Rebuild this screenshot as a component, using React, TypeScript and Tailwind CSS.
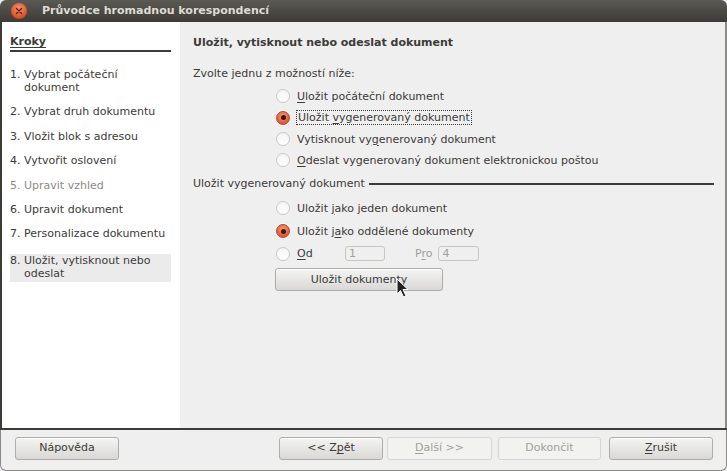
import React from "react";

const font = { fontFamily: '"DejaVu Sans", sans-serif' };

function Radio({ checked }: { checked?: boolean }) {
  if (checked) {
    return (
      <span className="inline-flex h-[14px] w-[14px] shrink-0 items-center justify-center rounded-full border border-[#b8432a] bg-[radial-gradient(circle_at_50%_35%,#f59a7c,#df5a3a_70%)] shadow-[0_0_0_1px_rgba(255,255,255,0.6)]">
        <span className="h-[5px] w-[5px] rounded-full bg-[#3a1a12]" />
      </span>
    );
  }
  return (
    <span className="inline-block h-[14px] w-[14px] shrink-0 rounded-full border border-[#c9c7c3] bg-[linear-gradient(#f4f4f4,#ffffff)]" />
  );
}

function U({ children }: { children: React.ReactNode }) {
  return <span className="underline underline-offset-2">{children}</span>;
}

function Btn({
  children,
  disabled,
  className = "",
}: {
  children: React.ReactNode;
  disabled?: boolean;
  className?: string;
}) {
  return (
    <div
      className={
        "flex h-[23px] items-center justify-center rounded-[3px] border text-[11px] " +
        (disabled
          ? "border-[#d6d5d3] bg-[#f2f2f1] text-[#a09f9c] "
          : "border-[#aeaca9] bg-[linear-gradient(#f4f4f3,#d9d8d6)] text-[#3c3b37] shadow-[inset_0_1px_0_#fff] ") +
        className
      }
    >
      {children}
    </div>
  );
}

export default function App() {
  return (
    <div className="relative h-[471px] w-[727px] overflow-hidden bg-[#efefef]" style={font}>
      <div className="flex h-full w-full flex-col">
        {/* title bar */}
        <div className="flex h-[22px] shrink-0 items-center rounded-t-[6px] bg-[linear-gradient(#5a5954,#3c3b37)]">
          <div className="ml-[11px] flex h-[16px] w-[16px] items-center justify-center rounded-full bg-[radial-gradient(circle_at_50%_35%,#f7946c,#d9532a_65%,#a93a17)]">
            <svg width="8" height="8" viewBox="0 0 8 8">
              <path d="M1.5 1.5L6.5 6.5M6.5 1.5L1.5 6.5" stroke="#5a2310" strokeWidth="1.4" strokeLinecap="round" />
            </svg>
          </div>
          <span className="ml-[15px] text-[11px] font-bold text-[#dfdbd2]">Průvodce hromadnou korespondencí</span>
        </div>

        {/* body */}
        <div className="flex h-[406px] shrink-0">
          {/* left */}
          <div className="w-[180px] shrink-0 border-l-2 border-[#3c3b37] bg-white pl-[8px] pr-[9px] pt-[13px] text-[11px] text-[#3c3b37]">
            <div className="border-b-2 border-[#3c3b37] pb-[1px] font-bold leading-[14px]">
              <span className="underline underline-offset-2">Kroky</span>
            </div>
            <div className="mt-[16px] flex flex-col gap-[11.4px] leading-[13px]">
              <div className="flex"><span className="w-[14px] shrink-0">1.</span><span>Vybrat počáteční<br />dokument</span></div>
              <div className="flex"><span className="w-[14px] shrink-0">2.</span><span>Vybrat druh dokumentu</span></div>
              <div className="flex"><span className="w-[14px] shrink-0">3.</span><span>Vložit blok s adresou</span></div>
              <div className="flex"><span className="w-[14px] shrink-0">4.</span><span>Vytvořit oslovení</span></div>
              <div className="flex text-[#8d8b87]"><span className="w-[14px] shrink-0">5.</span><span>Upravit vzhled</span></div>
              <div className="flex"><span className="w-[14px] shrink-0">6.</span><span>Upravit dokument</span></div>
              <div className="flex"><span className="w-[14px] shrink-0">7.</span><span>Personalizace dokumentu</span></div>
              <div className="mt-[2px] flex bg-[#ebebeb] pb-[2px] pt-0"><span className="w-[14px] shrink-0">8.</span><span>Uložit, vytisknout nebo<br />odeslat</span></div>
            </div>
          </div>

          {/* right */}
          <div className="flex-1 border-r-2 border-[#8c8b88] bg-[#efefef] pl-[13px] pr-[11px] pt-[14px] text-[11px] leading-[13px] text-[#3c3b37]">
            <div className="font-bold">Uložit, vytisknout nebo odeslat dokument</div>
            <div className="mt-[18px]">Zvolte jednu z možností níže:</div>
            <div className="ml-[83px] mt-[9px] flex flex-col gap-[7px]">
              <div className="flex items-center gap-[7px]"><Radio /><span><U>U</U>ložit počáteční dokument</span></div>
              <div className="flex items-center gap-[7px]"><Radio checked /><span className="-ml-[1px] border border-dotted border-[#3c3b37] px-[1px]">Uložit <U>v</U>ygenerovaný dokument</span></div>
              <div className="flex items-center gap-[7px]"><Radio /><span>Vytisknout vy<U>g</U>enerovaný dokument</span></div>
              <div className="flex items-center gap-[7px]"><Radio /><span><U>O</U>deslat vygenerovaný dokument elektronickou poštou</span></div>
            </div>
            <div className="mt-[10px] flex items-center gap-[4px]">
              <span>Uložit vygenerovaný dokument</span>
              <div className="h-[2px] flex-1 bg-[#3c3b37]" />
            </div>
            <div className="ml-[83px] mt-[11px] flex flex-col">
              <div className="flex items-center gap-[7px]"><Radio /><span>Uložit <U>j</U>ako jeden dokument</span></div>
              <div className="mt-[9px] flex items-center gap-[7px]"><Radio checked /><span>Uložit j<U>a</U>ko oddělené dokumenty</span></div>
              <div className="mt-[8px] flex items-center gap-[7px]">
                <Radio />
                <span className="w-[41px]"><U>O</U>d</span>
                <div className="h-[15px] w-[40px] rounded-[3px] border border-[#c7c6c3] pl-[3px] text-[11px] leading-[13px] text-[#a09f9c]">1</div>
                <span className="ml-[23px] text-[#a09f9c]">P<U>r</U>o</span>
                <div className="-ml-[1px] h-[15px] w-[41px] rounded-[3px] border border-[#c7c6c3] pl-[3px] text-[11px] leading-[13px] text-[#a09f9c]">4</div>
              </div>
              <Btn className="-ml-[1px] mt-[7px] h-[22px] w-[168px]">Uložit dokumenty</Btn>
            </div>
          </div>
        </div>

        {/* separator + bottom */}
        <div className="h-[2px] shrink-0 bg-[#3c3b37]" />
        <div className="flex flex-1 items-start rounded-b-[6px] border-x border-b border-[#8c8b88] bg-[#efefef] pl-[14px] pr-[13px] pt-[7px]">
          <Btn className="w-[104px]">Nápověda</Btn>
          <div className="flex-1" />
          <Btn className="w-[104px]">&lt;&lt; Z<U>p</U>ět</Btn>
          <Btn disabled className="ml-[4px] w-[105px]"><U>D</U>alší &gt;&gt;</Btn>
          <Btn disabled className="ml-[6px] w-[103px]">Dokončit</Btn>
          <Btn className="ml-[8px] w-[104px]"><U>Z</U>rušit</Btn>
        </div>
      </div>

      {/* mouse cursor */}
      <svg className="absolute left-[396px] top-[278px]" width="14" height="21" viewBox="0 0 14 21">
        <path d="M1 1 L1 16 L4.5 12.5 L7.5 19 L10 18 L7 11.5 L12 11.5 Z" fill="#222" stroke="#fff" strokeWidth="1" strokeLinejoin="round" />
      </svg>
    </div>
  );
}
